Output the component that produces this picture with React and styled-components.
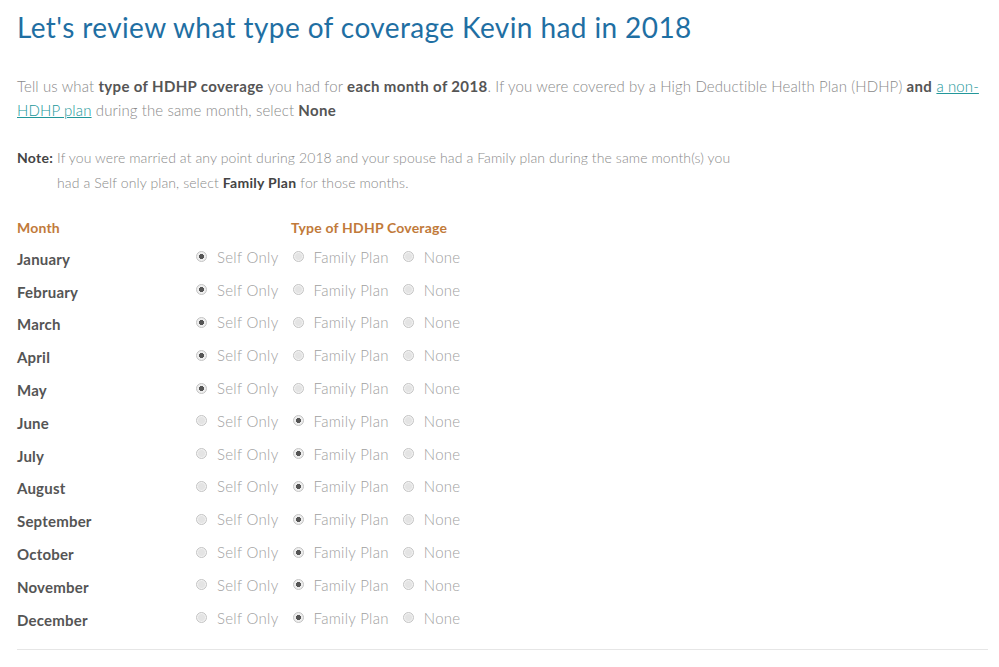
import styled, { createGlobalStyle } from "styled-components";

const GlobalStyle = createGlobalStyle`
  body {
    margin: 0;
    background: #fff;
    font-family: Lato, "Open Sans", sans-serif;
  }
`;

const months = [
  ["January", "self"],
  ["February", "self"],
  ["March", "self"],
  ["April", "self"],
  ["May", "self"],
  ["June", "family"],
  ["July", "family"],
  ["August", "family"],
  ["September", "family"],
  ["October", "family"],
  ["November", "family"],
  ["December", "family"],
];

const options = [
  { value: "self", label: "Self Only" },
  { value: "family", label: "Family Plan" },
  { value: "none", label: "None" },
];

function App() {
  return (
    <>
      <GlobalStyle />
      <Page>
        <Title>Let's review what type of coverage Kevin had in 2018</Title>
        <Intro>
          Tell us what <b>type of HDHP coverage</b> you had for{" "}
          <b>each month of 2018</b>. If you were covered by a High Deductible
          Health Plan (HDHP) <b>and</b> <Link href="#">a non-HDHP plan</Link>{" "}
          during the same month, select <b>None</b>
        </Intro>
        <Note>
          <b>Note:</b> If you were married at any point during 2018 and your
          spouse had a Family plan during the same month(s) you
          <br />
          <Indent>
            had a Self only plan, select <b>Family Plan</b> for those months.
          </Indent>
        </Note>
        <Table>
          <HeadCell>Month</HeadCell>
          <HeadCell $offset>Type of HDHP Coverage</HeadCell>
          {months.map(([name, picked]) => (
            <Row key={name}>
              <MonthName>{name}</MonthName>
              <Options>
                {options.map((opt) => (
                  <Option key={opt.value}>
                    <Radio $checked={picked === opt.value} />
                    {opt.label}
                  </Option>
                ))}
              </Options>
            </Row>
          ))}
        </Table>
        <Divider />
      </Page>
    </>
  );
}

const Page = styled.div`
  padding: 10px 11px 0 17px;
`;

const Title = styled.h1`
  margin: 0;
  font-size: 28px;
  line-height: 34px;
  font-weight: 400;
  color: #1f6fa3;
  letter-spacing: 0.4px;
`;

const Intro = styled.p`
  margin: 30px 0 0;
  font-size: 15px;
  line-height: 24px;
  font-weight: 300;
  letter-spacing: 0.12px;
  color: #8a8a8a;

  & b {
    font-weight: 700;
    color: #555;
    letter-spacing: 0.35px;
  }
`;

const Link = styled.a`
  color: #22979a;
  text-decoration: underline;
`;

const Note = styled.p`
  margin: 23px 0 0;
  font-size: 14px;
  line-height: 25px;
  font-weight: 300;
  letter-spacing: 0.1px;
  color: #8a8a8a;

  & b {
    font-weight: 700;
    color: #444;
    letter-spacing: 0.3px;
  }
`;

const Indent = styled.span`
  padding-left: 40px;
`;

const Table = styled.div`
  display: grid;
  grid-template-columns: 178px 1fr;
  margin-top: 23px;
`;

const HeadCell = styled.div`
  font-size: 14px;
  font-weight: 700;
  letter-spacing: 0.2px;
  color: #c17a3a;
  line-height: 20px;
  padding-left: ${(p) => (p.$offset ? "96px" : "0")};
`;

const Row = styled.div`
  box-sizing: border-box;
  grid-column: 1 / -1;
  display: grid;
  grid-template-columns: 178px 1fr;
  align-items: center;
  height: 32.8px;
  padding-top: 5px;
`;

const MonthName = styled.div`
  font-size: 15px;
  font-weight: 700;
  letter-spacing: 0.2px;
  color: #555;
  padding-top: 4px;
`;

const Options = styled.div`
  display: flex;
  align-items: center;
  gap: 13px;
`;

const Option = styled.label`
  display: flex;
  align-items: center;
  gap: 10px;
  font-size: 15px;
  font-weight: 300;
  letter-spacing: 0.3px;
  color: #a0a0a0;
`;

const Radio = styled.span`
  box-sizing: border-box;
  width: 11px;
  height: 11px;
  margin-left: 1px;
  border-radius: 50%;
  border: 1px solid #c4c4c4;
  background: ${(p) =>
    p.$checked
      ? "radial-gradient(circle, #555 0 2.3px, #eee 2.8px)"
      : "radial-gradient(circle, #e4e4e4 0 3px, #f2f2f2 4px)"};
`;

const Divider = styled.hr`
  margin: 17px 0 0;
  border: 0;
  border-top: 1px solid #e6e6e6;
`;

export default App;
